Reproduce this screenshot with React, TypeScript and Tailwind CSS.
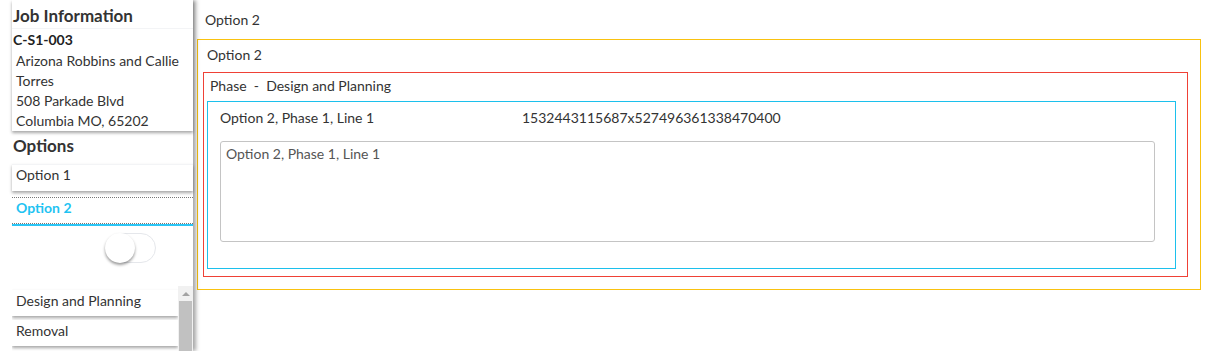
import React from "react";

const font = { fontFamily: "Lato, 'Open Sans', sans-serif" };

function Sidebar() {
  return (
    <div className="relative z-10 flex h-full w-[193px] shrink-0 flex-col bg-white pl-[12px] shadow-[3px_0_4px_rgba(0,0,0,0.35)]">
      <div className="bg-white shadow-[0_2px_3px_rgba(0,0,0,0.35)]">
        <div className="border-b border-gray-100 pl-[1px] pt-[5px] pb-[1px] text-[17px] font-bold leading-[22px] text-[#333]">
          Job Information
        </div>
        <div className="pl-[1px] pt-[1px] text-[14px] font-bold leading-[20px] text-[#222]">C-S1-003</div>
        <div className="pl-[4px] pr-[6px] pt-[1px] text-[14px] leading-[20px] text-[#333]">
          <div>Arizona Robbins and Callie Torres</div>
          <div>508 Parkade Blvd</div>
          <div>Columbia MO, 65202</div>
        </div>
      </div>
      <div className="pl-[1px] pt-[4px] pb-[7px] text-[17px] font-bold leading-[22px] text-[#333]">Options</div>
      <div className="border-t border-gray-100 bg-white pt-[1px] pb-[7px] pl-[4px] text-[14px] leading-[18px] text-[#333] shadow-[0_2px_3px_rgba(0,0,0,0.35)]">
        Option 1
      </div>
      <div className="mt-[6px] border-t border-dotted border-[#777] pl-[4px] pt-[1px] pb-[6px] text-[14px] font-bold leading-[18px] text-[#1fc3f2]">
        Option 2
      </div>
      <div className="border-t border-dotted border-[#777]" />
      <div className="h-[2px] bg-[#29c5f6]" />
      <div className="flex h-[60px] shrink-0 justify-end pr-[37px] pt-[7px]">
        <div className="relative h-[30px] w-[50px] rounded-full border border-gray-200 bg-white">
          <div className="absolute left-[-2px] top-[-1px] h-[30px] w-[30px] rounded-full bg-white shadow-[0_2px_3px_rgba(0,0,0,0.4)]" />
        </div>
      </div>
      <div className="flex flex-1 overflow-hidden">
        <div className="flex flex-1 flex-col gap-[4px] pt-[4px]">
          <div className="bg-white pt-[2px] pb-[6px] pl-[4px] text-[14px] leading-[18px] text-[#333] shadow-[0_2px_3px_rgba(0,0,0,0.35)]">
            Design and Planning
          </div>
          <div className="bg-white pt-[2px] pb-[6px] pl-[4px] text-[14px] leading-[18px] text-[#333] shadow-[0_2px_3px_rgba(0,0,0,0.35)]">
            Removal
          </div>
        </div>
        <div className="flex w-[15px] flex-col bg-[#f1f1f1]">
          <div className="flex h-[15px] items-center justify-center">
            <div className="h-0 w-0 border-x-[4px] border-b-[4px] border-x-transparent border-b-[#a3a3a3]" />
          </div>
          <div className="mx-[1px] flex-1 bg-[#c1c1c1]" />
        </div>
      </div>
    </div>
  );
}

function Content() {
  return (
    <div className="flex flex-1 flex-col pl-[4px] pr-[25px] text-[14px] leading-[18px] text-[#333]">
      <div className="pl-[8px] pt-[11px] pb-[10px]">Option 2</div>
      <div className="border border-[#f9c20f] pl-[5px] pr-[12px] pb-[12px]">
        <div className="pl-[4px] pt-[6px] pb-[8px]">Option 2</div>
        <div className="border border-[#ef4136] pl-[3px] pr-[11px] pb-[7px]">
          <div className="pl-[3px] pt-[4px] pb-[6px]">Phase&nbsp; -&nbsp; Design and Planning</div>
          <div className="border border-[#1cc0ec] pl-[12px] pr-[20px] pb-[26px]">
            <div className="flex pt-[7px] pb-[14px]">
              <div className="w-[302px]">Option 2, Phase 1, Line 1</div>
              <div>1532443115687x527496361338470400</div>
            </div>
            <div className="h-[101px] rounded-[3px] border border-[#c4c4c4] px-[5px] pt-[3px] text-[#555]">
              Option 2, Phase 1, Line 1
            </div>
          </div>
        </div>
      </div>
    </div>
  );
}

export default function App() {
  return (
    <div className="flex h-[351px] w-[1226px] overflow-hidden bg-white" style={font}>
      <Sidebar />
      <Content />
    </div>
  );
}
